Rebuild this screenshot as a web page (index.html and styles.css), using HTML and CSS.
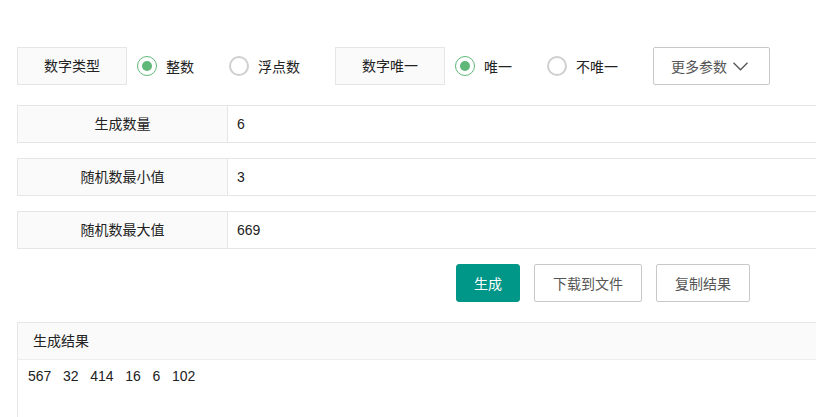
FILE: index.html
```html
<!DOCTYPE html>
<html lang="zh-CN">
<head>
    <meta charset="UTF-8">
    <title>随机数生成器</title>
    <link rel="stylesheet" href="styles.css">
</head>
<body>
    <div class="page">
        <div class="option-row">
            <div class="option-label">数字类型</div>
            <label class="radio checked"><span class="radio-icon"></span>整数</label>
            <label class="radio"><span class="radio-icon"></span>浮点数</label>
            <div class="option-label">数字唯一</div>
            <label class="radio checked"><span class="radio-icon"></span>唯一</label>
            <label class="radio"><span class="radio-icon"></span>不唯一</label>
            <button class="btn btn-more">更多参数
                <svg width="15" height="9" viewBox="0 0 15 9"><polyline points="0.5,0.8 7.5,7.8 14.5,0.8" fill="none" stroke="#555" stroke-width="1.3"/></svg>
            </button>
        </div>

        <div class="form-item first">
            <div class="form-label">生成数量</div>
            <div class="form-input">6</div>
        </div>
        <div class="form-item">
            <div class="form-label">随机数最小值</div>
            <div class="form-input">3</div>
        </div>
        <div class="form-item">
            <div class="form-label">随机数最大值</div>
            <div class="form-input">669</div>
        </div>

        <div class="actions">
            <button class="btn btn-primary">生成</button>
            <button class="btn">下载到文件</button>
            <button class="btn">复制结果</button>
        </div>

        <div class="result">
            <div class="result-head">生成结果</div>
            <div class="result-body">567   32   414   16   6   102</div>
        </div>
    </div>
</body>
</html>
```

FILE: styles.css
```css
html, body {
    margin: 0;
    overflow: hidden;
}

body {
    font-family: "Liberation Sans", "Noto Sans CJK SC", sans-serif;
    font-size: 14px;
    color: #333;
    background: #fff;
}

.page {
    width: 1000px;
    padding: 47px 0 0 17px;
}

.option-row {
    display: flex;
    align-items: center;
    height: 38px;
}

.option-label {
    box-sizing: border-box;
    width: 110px;
    height: 38px;
    line-height: 36px;
    text-align: center;
    border: 1px solid #e6e6e6;
    background: #fafafa;
    color: #222;
}

.radio {
    display: flex;
    align-items: center;
    margin-right: 35px;
    color: #222;
}

.option-label + .radio {
    margin-left: 10px;
}

.radio-icon {
    box-sizing: border-box;
    width: 20px;
    height: 20px;
    border: 2px solid #cfcfcf;
    border-radius: 50%;
    margin-right: 9px;
    display: flex;
    align-items: center;
    justify-content: center;
}

.radio.checked .radio-icon {
    border-color: #5fb878;
    border-width: 1.5px;
}

.radio.checked .radio-icon::after {
    content: "";
    width: 10px;
    height: 10px;
    border-radius: 50%;
    background: #5fb878;
}

.btn {
    box-sizing: border-box;
    height: 38px;
    padding: 0 18px;
    border: 1px solid #c9c9c9;
    border-radius: 2px;
    background: #fff;
    color: #555;
    font-family: inherit;
    font-size: 14px;
    white-space: nowrap;
    display: inline-flex;
    align-items: center;
}

.btn-more {
    width: 117px;
    padding: 0 17px;
    gap: 6px;
}

.btn-primary {
    background: #009688;
    border-color: #009688;
    color: #fff;
    border-radius: 3px;
    padding: 0 17px;
}

.form-item {
    display: flex;
    height: 38px;
    margin-top: 15px;
    border: 1px solid #e6e6e6;
    box-sizing: border-box;
}

.form-item.first {
    margin-top: 20px;
}

.form-label {
    width: 209px;
    line-height: 36px;
    text-align: center;
    background: #fafafa;
    border-right: 1px solid #e6e6e6;
    color: #222;
}

.form-input {
    flex: 1;
    line-height: 36px;
    padding-left: 9px;
    color: #222;
}

.actions {
    display: flex;
    gap: 14px;
    padding-left: 439px;
    margin-top: 15px;
}

.result {
    margin-top: 20px;
    border: 1px solid #e6e6e6;
    height: 200px;
}

.result-head {
    height: 36px;
    line-height: 36px;
    padding-left: 15px;
    background: #fafafa;
    border-bottom: 1px solid #ededed;
    color: #222;
}

.result-body {
    padding: 8px 10px;
    white-space: pre;
    color: #222;
}
```
